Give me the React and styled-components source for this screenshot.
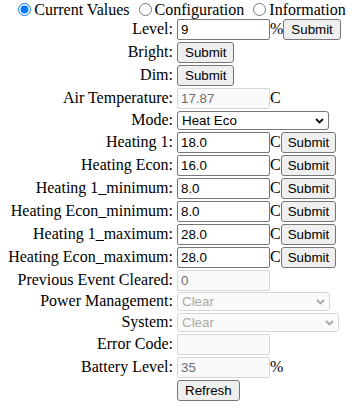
import React from "react";
import styled, { createGlobalStyle } from "styled-components";

const GlobalStyle = createGlobalStyle`
  body {
    margin: 0;
    font-family: "Liberation Serif", "Times New Roman", serif;
    font-size: 16px;
    color: #000;
    background: #fff;
  }
`;

const Page = styled.div`
  width: 359px;
`;

const Tabs = styled.div`
  height: 18px;
  text-align: center;
  white-space: nowrap;
  line-height: 18px;
`;

const Radio = styled.input`
  width: 13px;
  height: 13px;
  margin: 3px 3px 0 5px;
  vertical-align: -1px;
`;

const Form = styled.div`
  display: flex;
  flex-direction: column;
`;

const Row = styled.div`
  display: flex;
  align-items: baseline;
  box-sizing: border-box;
  height: ${(p) => p.$h || 23}px;
  padding-top: 1px;
`;

const Label = styled.span`
  flex: 0 0 173px;
  margin-right: 4px;
  text-align: right;
  white-space: nowrap;
`;

const Field = styled.input`
  box-sizing: border-box;
  width: 93px;
  height: 21px;
  margin: 0;
  padding: 1px 3px;
  border: 1px solid ${(p) => (p.disabled ? "#d6d6d6" : "#767676")};
  border-radius: 2px;
  background: ${(p) => (p.disabled ? "#fafafa" : "#fff")};
  color: ${(p) => (p.disabled ? "#6d6d6d" : "#000")};
  font-family: "Liberation Sans", Arial, sans-serif;
  font-size: 13.33px;
  outline: none;
`;

const Unit = styled.span`
  white-space: nowrap;
`;

const Button = styled.button`
  box-sizing: border-box;
  height: 21px;
  margin: 0;
  padding: 1px ${(p) => (p.$tight ? 6 : 7)}px;
  border: 1px solid #767676;
  border-radius: 3px;
  background: #efefef;
  color: #000;
  font-family: "Liberation Sans", Arial, sans-serif;
  font-size: 13.33px;
  line-height: 15px;
`;

const SelectWrap = styled.span`
  position: relative;
  display: inline-block;
`;

const Select = styled.select`
  appearance: none;
  box-sizing: border-box;
  width: ${(p) => p.$w}px;
  height: 19px;
  margin: 0;
  padding: 0 16px 0 4px;
  border: 1px solid ${(p) => (p.disabled ? "#d6d6d6" : "#767676")};
  border-radius: 3px;
  background: ${(p) => (p.disabled ? "#fafafa" : "#fff")};
  color: ${(p) => (p.disabled ? "#a9a9a9" : "#000")};
  font-family: "Liberation Sans", Arial, sans-serif;
  font-size: 13.33px;
  opacity: 1;
`;

const Chevron = styled.svg`
  position: absolute;
  right: 5px;
  top: 7px;
  pointer-events: none;
`;

const Drop = ({ width, value, disabled }) => (
  <SelectWrap>
    <Select $w={width} disabled={disabled} defaultValue={value}>
      <option>{value}</option>
    </Select>
    <Chevron width="9" height="6" viewBox="0 0 9 6">
      <polyline
        points="1,1 4.5,4.5 8,1"
        fill="none"
        stroke={disabled ? "#a8a8a8" : "#111"}
        strokeWidth="1.9"
      />
    </Chevron>
  </SelectWrap>
);

const setpoints = [
  ["Heating 1:", "18.0"],
  ["Heating Econ:", "16.0"],
  ["Heating 1_minimum:", "8.0"],
  ["Heating Econ_minimum:", "8.0"],
  ["Heating 1_maximum:", "28.0"],
  ["Heating Econ_maximum:", "28.0"],
];

export default function App() {
  return (
    <Page>
      <GlobalStyle />
      <Tabs>
        <label>
          <Radio type="radio" name="tab" defaultChecked />
          Current Values
        </label>{" "}
        <label>
          <Radio type="radio" name="tab" />
          Configuration
        </label>{" "}
        <label>
          <Radio type="radio" name="tab" />
          Information
        </label>
      </Tabs>
      <Form>
        <Row>
          <Label>Level:</Label>
          <Field defaultValue="9" />
          <Unit>%</Unit>
          <Button>Submit</Button>
        </Row>
        <Row>
          <Label>Bright:</Label>
          <Button>Submit</Button>
        </Row>
        <Row>
          <Label>Dim:</Label>
          <Button>Submit</Button>
        </Row>
        <Row>
          <Label>Air Temperature:</Label>
          <Field disabled defaultValue="17.87" />
          <Unit>C</Unit>
        </Row>
        <Row $h={21}>
          <Label>Mode:</Label>
          <Drop width={152} value="Heat Eco" />
        </Row>
        {setpoints.map(([label, value]) => (
          <Row key={label}>
            <Label>{label}</Label>
            <Field defaultValue={value} />
            <Unit>C</Unit>
            <Button $tight>Submit</Button>
          </Row>
        ))}
        <Row $h={22}>
          <Label>Previous Event Cleared:</Label>
          <Field disabled defaultValue="0" />
        </Row>
        <Row $h={21}>
          <Label>Power Management:</Label>
          <Drop width={153} value="Clear" disabled />
        </Row>
        <Row $h={21}>
          <Label>System:</Label>
          <Drop width={162} value="Clear" disabled />
        </Row>
        <Row>
          <Label>Error Code:</Label>
          <Field disabled defaultValue="" />
        </Row>
        <Row>
          <Label>Battery Level:</Label>
          <Field disabled defaultValue="35" />
          <Unit>%</Unit>
        </Row>
        <Row>
          <Label />
          <Button>Refresh</Button>
        </Row>
      </Form>
    </Page>
  );
}
